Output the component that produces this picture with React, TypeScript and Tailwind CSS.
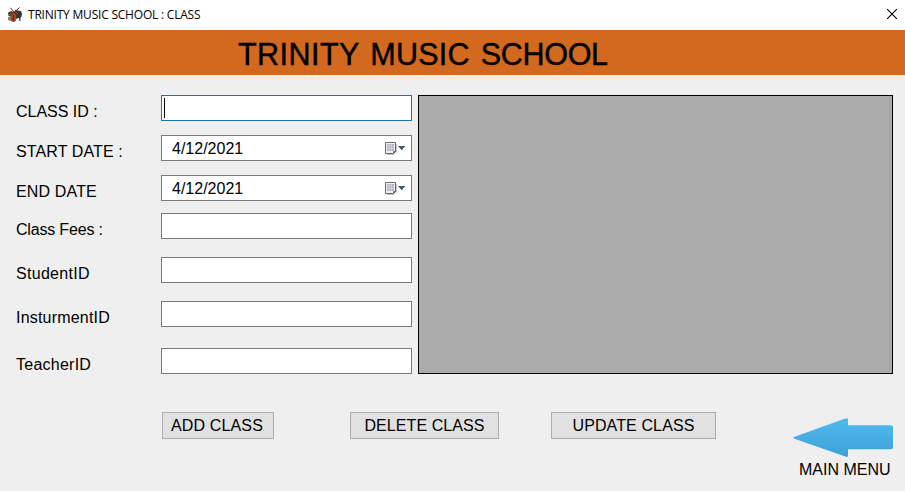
const fields = [
  { label: 'CLASS ID :', gap: '', kind: 'focus', track: 'tracking-[-0.02px]' },
  { label: 'START DATE :', gap: 'mt-[14px]', kind: 'date', track: 'tracking-[0.12px]' },
  { label: 'END DATE', gap: 'mt-[14px]', kind: 'date', track: 'tracking-[0.15px]' },
  { label: 'Class Fees :', gap: 'mt-3', kind: 'text', track: 'tracking-[-0.18px]' },
  { label: 'StudentID', gap: 'mt-[18px]', kind: 'text', track: 'tracking-[0.3px]' },
  { label: 'InsturmentID', gap: 'mt-[18px]', kind: 'text', track: 'tracking-[0.2px]' },
  { label: 'TeacherID', gap: 'mt-[21px]', kind: 'text', track: 'tracking-[0.25px]' },
];

function InstrumentsIcon() {
  return (
    <svg width="16" height="16" viewBox="0 0 16 16" className="shrink-0">
      <path d="M7 5 L10 3.5 L14 4 L15 7 L14.4 10 L13.5 10.5 L13.5 14 L12.5 14 L12 11 L8 12Z" fill="#30363a" />
      <path d="M3.5 .8 L7 5 M12.5 .5 L8 5" stroke="#5a2d20" strokeWidth="1" />
      <path d="M1 5.5 L4 4 L7 5 L6 9 L1.5 9Z" fill="#54413b" />
      <path d="M1 10 L4 9 L5 12 L3 14 L1 13Z" fill="#7f8280" />
      <path d="M9.5 3 L6 9" stroke="#6e2413" strokeWidth="2" />
      <path d="M5.3 7 C7.8 5.5 10.2 7.5 9.2 9.8 C10.2 12 8.8 15 6.2 15 C3.9 15 3 12.5 4 10.8 C3.3 9 4 7.7 5.3 7Z" fill="#a94624" />
      <path d="M6.5 8 L6 13.5" stroke="#47201a" strokeWidth="1" />
      <path d="M9 5 L11 7" stroke="#b24a2b" strokeWidth="1" />
    </svg>
  );
}

function CalendarIcon() {
  return (
    <svg width="22" height="14" viewBox="0 0 22 14" className="shrink-0">
      <path d="M2 12.5 H9 L11.5 10 V2" fill="none" stroke="#c2c2c8" />
      <path d="M.5 .5 H10.5 V9.5 L8.5 11.5 H.5Z" fill="#f2f2f6" stroke="#66666d" />
      <path d="M2 2h7v7H2z" fill="#b1b1c4" />
      <path d="M4 2v7M6.5 2v7M2 4h7M2 6.5h7" stroke="#e6e6ee" strokeWidth=".6" />
      <path d="M8.5 11 V9.5 H10.5" fill="none" stroke="#66666d" />
      <path d="M13 4 H20.4 L16.7 8.2Z" fill="#465669" />
    </svg>
  );
}

function Field({ label, gap, kind, track }: (typeof fields)[number]) {
  return (
    <div className={`flex h-[26px] ${gap}`}>
      <label className={`w-[145px] shrink-0 whitespace-nowrap pt-1 leading-[26px] ${track}`}>{label}</label>
      <div
        className={`flex w-[251px] items-center border bg-white ${kind === 'focus' ? 'border-[#1a74b0]' : 'border-[#7a7a7a]'}`}
      >
        {kind === 'focus' && <span className="ml-[2px] h-5 w-px bg-black" />}
        {kind === 'date' && (
          <>
            <span className="ml-[10px] flex-1 pt-[2px] leading-6">4/12/2021</span>
            <span className="mr-[4px] pt-[2px]">
              <CalendarIcon />
            </span>
          </>
        )}
      </div>
    </div>
  );
}

export default function App() {
  return (
    <div className="flex h-[491px] w-[905px] flex-col overflow-hidden bg-[#efefef] font-['Liberation_Sans',Arial,sans-serif] text-[16px] text-black">
      <header className="flex h-[30px] shrink-0 items-center bg-white pl-[7px] pr-[8px]">
        <InstrumentsIcon />
        <span className="ml-[5px] flex-1 whitespace-nowrap font-['Open_Sans','Noto_Sans',sans-serif] text-[12px] tracking-[-0.21px]">
          TRINITY MUSIC SCHOOL : CLASS
        </span>
        <svg width="10" height="10" viewBox="0 0 10 10" className="-mt-[2px]">
          <path d="M0 0 L10 10 M10 0 L0 10" stroke="#000" strokeWidth="1.1" />
        </svg>
      </header>
      <div className="flex h-[45px] shrink-0 bg-[#d2691e] pl-[238px]">
        <h1 className="whitespace-nowrap pt-[2px] text-[30.5px] leading-[45px] [-webkit-text-stroke:0.45px_black] [word-spacing:2.2px]">
          <span className="tracking-[0.45px]">TRINITY </span>
          <span className="tracking-[0.25px]">MUSIC </span>
          <span className="tracking-[-0.3px]">SCHOOL</span>
        </h1>
      </div>
      <main className="flex h-[299px] shrink-0 pl-4 pr-3 pt-5">
        <div className="w-[402px] shrink-0">
          {fields.map((f) => (
            <Field key={f.label} {...f} />
          ))}
        </div>
        <div className="h-[279px] w-[475px] border border-black bg-[#ababab]" />
      </main>
      <footer className="flex pl-[162px]">
        <button className="mt-[38px] h-[27px] w-[112px] whitespace-nowrap border border-[#adadad] bg-[#e1e1e1] leading-[25px] tracking-[0.15px]"><span className="-ml-[2px]">ADD CLASS</span></button>
        <button className="ml-[76px] mt-[38px] h-[27px] w-[149px] whitespace-nowrap border border-[#adadad] bg-[#e1e1e1] leading-[25px] tracking-[0.08px]">DELETE CLASS</button>
        <button className="ml-[52px] mt-[38px] h-[27px] w-[165px] whitespace-nowrap border border-[#adadad] bg-[#e1e1e1] leading-[25px] tracking-[0.12px]">UPDATE CLASS</button>
        <div className="ml-[77px] mt-[44px] w-[100px]">
          <svg width="100" height="39" viewBox="0 0 100 39" className="block">
            <defs>
              <linearGradient id="arrow" x1="0" y1="0" x2="0" y2="1">
                <stop offset="0" stopColor="#4ebbee" />
                <stop offset="1" stopColor="#3ea0d8" />
              </linearGradient>
            </defs>
            <path
              d="M0.8 19 L53 0.3 Q55 -.2 55 1.5 V7.2 H98 Q100 7.2 100 9 V29.5 Q100 31.3 98 31.3 H55 V37.8 Q55 39.3 53 38.8 L.8 20.5 Q-.4 19.8 .8 19Z"
              fill="url(#arrow)"
            />
          </svg>
          <div className="ml-[6px] mt-1 whitespace-nowrap leading-[18px]">MAIN MENU</div>
        </div>
      </footer>
    </div>
  );
}
